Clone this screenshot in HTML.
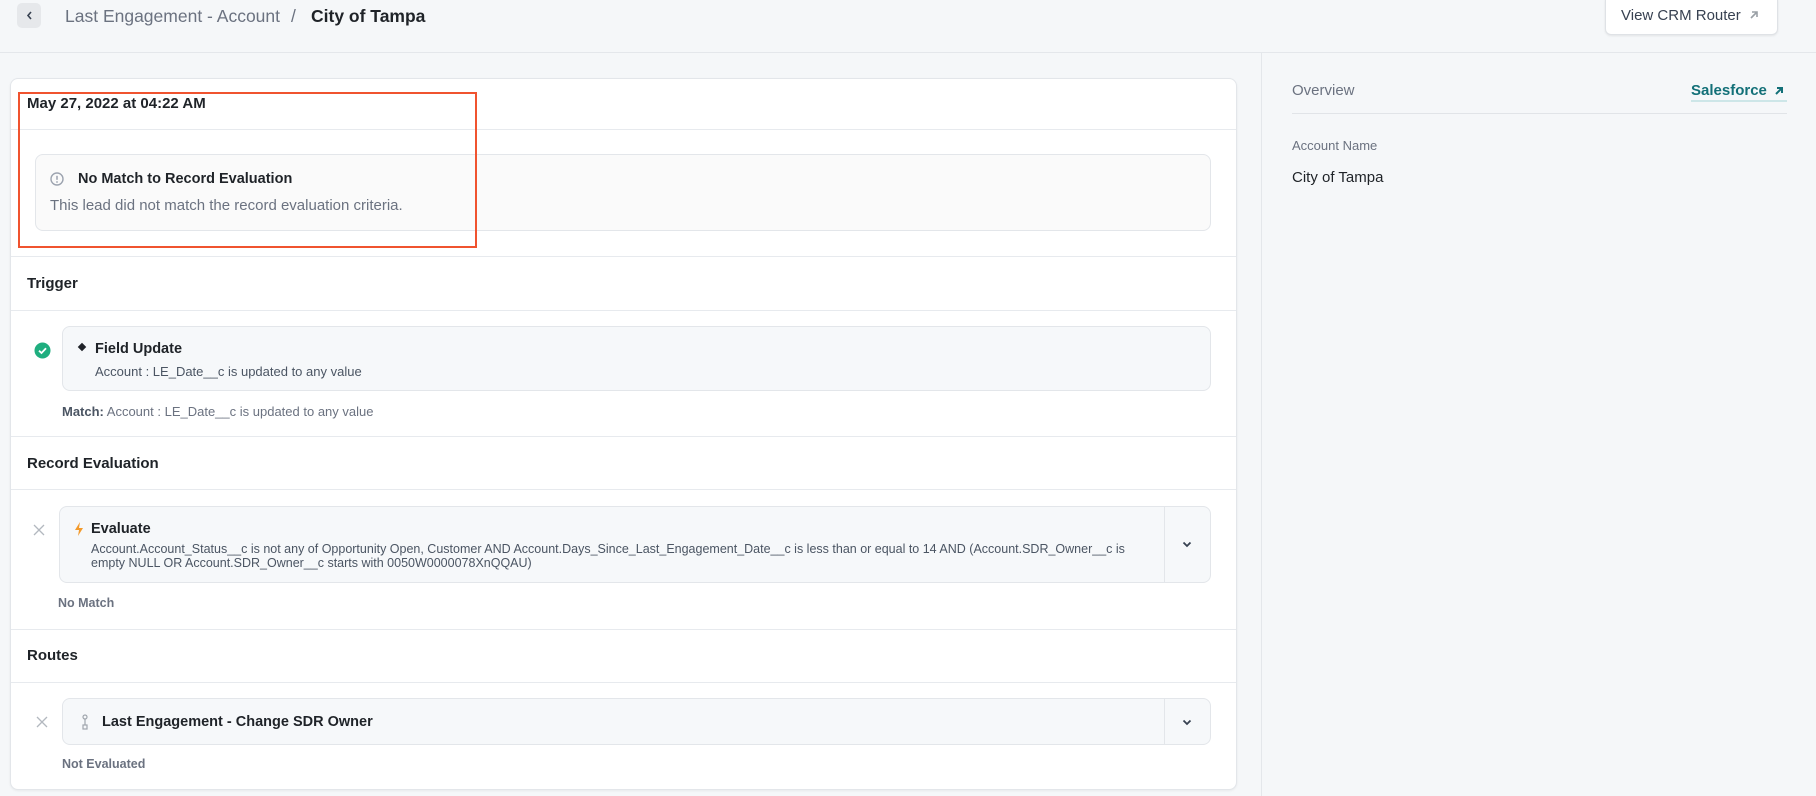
<!DOCTYPE html>
<html><head><meta charset="utf-8"><style>
*{box-sizing:border-box;margin:0;padding:0}
body{width:1816px;height:796px;overflow:hidden;background:#f5f7f9;font-family:"Liberation Sans",Arial,sans-serif;color:#1f2328;position:relative}
.a{position:absolute;white-space:nowrap}
.line{position:absolute;height:1px;background:#e7eaee}
.box{position:absolute;background:#f6f8fa;border:1px solid #e3e6ea;border-radius:8px}
.sb{font-weight:bold}
.g{color:#6b7280}
</style></head><body>
<div class="a" style="left:17px;top:3px;width:24px;height:25px;background:#e6e8eb;border-radius:5px"></div>
<svg class="a" style="left:24px;top:10px" width="11" height="11" viewBox="0 0 11 11"><path d="M7 2 L4 5.5 L7 9" stroke="#374151" stroke-width="1.6" fill="none"/></svg>
<div class="a" style="left:65px;top:6px;font-size:17.5px;color:#6b7280">Last Engagement - Account</div>
<div class="a" style="left:291px;top:6px;font-size:17.5px;color:#6b7280">/</div>
<div class="a sb" style="left:311px;top:6px;font-size:17.5px;color:#1f2328">City of Tampa</div>
<div class="a" style="left:1605px;top:-6px;width:173px;height:41px;background:#fff;border:1px solid #dfe2e6;border-radius:6px;box-shadow:0 1px 2px rgba(0,0,0,.08)"></div>
<div class="a" style="left:1621px;top:7px;font-size:15px;color:#374151">View CRM Router</div>
<svg class="a" style="left:1749px;top:10px" width="10" height="10" viewBox="0 0 10 10"><path d="M2 8 L8 2 M3 2 H8 V7" stroke="#9aa0a6" stroke-width="1.6" fill="none"/></svg>
<div class="line" style="left:0;top:52px;width:1816px;background:#e4e7eb"></div>
<div class="a" style="left:1261px;top:52px;width:1px;height:744px;background:#e4e7eb"></div>
<div class="a g" style="left:1292px;top:82px;font-size:15px">Overview</div>
<div class="a sb" style="left:1691px;top:82px;font-size:15px;color:#137078">Salesforce</div>
<svg class="a" style="left:1774px;top:86px" width="10" height="10" viewBox="0 0 10 10"><path d="M2 8 L8 2 M3 2 H8 V7" stroke="#137078" stroke-width="2" fill="none"/></svg>
<div class="line" style="left:1691px;top:100px;width:96px;height:2px;background:#cde6e8"></div>
<div class="line" style="left:1292px;top:113px;width:495px;background:#e1e4e8"></div>
<div class="a g" style="left:1292px;top:138px;font-size:13px">Account Name</div>
<div class="a" style="left:1292px;top:169px;font-size:15px">City of Tampa</div>
<div class="a" style="left:10px;top:78px;width:1227px;height:712px;background:#fff;border:1px solid #e3e6ea;border-radius:8px;box-shadow:0 1px 2px rgba(0,0,0,.06)"></div>
<div class="a sb" style="left:27px;top:95px;font-size:15px">May 27, 2022 at 04:22 AM</div>
<div class="line" style="left:11px;top:129px;width:1225px"></div>
<div class="box" style="left:35px;top:154px;width:1176px;height:77px;background:#fafafa"></div>
<svg class="a" style="left:50px;top:172px" width="14" height="14" viewBox="0 0 14 14"><circle cx="7" cy="7" r="6" stroke="#9ca3af" stroke-width="1.4" fill="none"/><path d="M7 3.8 V7.8" stroke="#9ca3af" stroke-width="1.5"/><circle cx="7" cy="10" r=".9" fill="#9ca3af"/></svg>
<div class="a sb" style="left:78px;top:171px;font-size:14.5px">No Match to Record Evaluation</div>
<div class="a g" style="left:50px;top:197px;font-size:15px">This lead did not match the record evaluation criteria.</div>
<div class="a" style="left:18px;top:92px;width:459px;height:156px;border:2px solid #f0532f"></div>
<div class="line" style="left:11px;top:256px;width:1225px"></div>
<div class="a sb" style="left:27px;top:275px;font-size:15px">Trigger</div>
<div class="line" style="left:11px;top:310px;width:1225px"></div>
<svg class="a" style="left:34px;top:342px" width="17" height="17" viewBox="0 0 17 17"><circle cx="8.5" cy="8.5" r="8" fill="#1fae7f"/><path d="M5 8.7 L7.5 11 L12 6.3" stroke="#fff" stroke-width="1.8" fill="none"/></svg>
<div class="box" style="left:62px;top:326px;width:1149px;height:65px"></div>
<div class="a" style="left:79px;top:344px;width:6px;height:6px;background:#1f2328;transform:rotate(45deg)"></div>
<div class="a sb" style="left:95px;top:341px;font-size:14.5px">Field Update</div>
<div class="a" style="left:95px;top:364px;font-size:13px;color:#4b5563">Account : LE_Date__c is updated to any value</div>
<div class="a" style="left:62px;top:404px;font-size:13px;color:#6b7280"><b style="color:#4b5563">Match:</b> Account : LE_Date__c is updated to any value</div>
<div class="line" style="left:11px;top:436px;width:1225px"></div>
<div class="a sb" style="left:27px;top:455px;font-size:15px">Record Evaluation</div>
<div class="line" style="left:11px;top:489px;width:1225px"></div>
<svg class="a" style="left:33px;top:524px" width="12" height="12" viewBox="0 0 12 12"><path d="M1 1 L11 11 M11 1 L1 11" stroke="#b3b8bf" stroke-width="1.3"/></svg>
<div class="box" style="left:59px;top:506px;width:1152px;height:77px"></div>
<div class="a" style="left:1164px;top:507px;width:1px;height:75px;background:#e3e6ea"></div>
<svg class="a" style="left:1182px;top:541px" width="10" height="7" viewBox="0 0 10 7"><path d="M1.5 1.5 L5 5 L8.5 1.5" stroke="#374151" stroke-width="1.8" fill="none"/></svg>
<svg class="a" style="left:74px;top:522px" width="10" height="14" viewBox="0 0 10 14"><path d="M6 0 L1 8 H5 L4 14 L9 6 H5 Z" fill="#f39a2b"/></svg>
<div class="a sb" style="left:91px;top:521px;font-size:14.5px">Evaluate</div>
<div class="a" style="left:91px;top:542px;font-size:12.5px;line-height:14px;color:#4b5563">Account.Account_Status__c is not any of Opportunity Open, Customer AND Account.Days_Since_Last_Engagement_Date__c is less than or equal to 14 AND (Account.SDR_Owner__c is<br>empty NULL OR Account.SDR_Owner__c starts with 0050W0000078XnQQAU)</div>
<div class="a sb" style="left:58px;top:596px;font-size:12.5px;color:#6b7280">No Match</div>
<div class="line" style="left:11px;top:629px;width:1225px"></div>
<div class="a sb" style="left:27px;top:647px;font-size:15px">Routes</div>
<div class="line" style="left:11px;top:682px;width:1225px"></div>
<svg class="a" style="left:36px;top:716px" width="12" height="12" viewBox="0 0 12 12"><path d="M1 1 L11 11 M11 1 L1 11" stroke="#b3b8bf" stroke-width="1.3"/></svg>
<div class="box" style="left:62px;top:698px;width:1149px;height:47px"></div>
<div class="a" style="left:1164px;top:699px;width:1px;height:45px;background:#e3e6ea"></div>
<svg class="a" style="left:1182px;top:719px" width="10" height="7" viewBox="0 0 10 7"><path d="M1.5 1.5 L5 5 L8.5 1.5" stroke="#374151" stroke-width="1.8" fill="none"/></svg>
<svg class="a" style="left:82px;top:714px" width="6" height="16" viewBox="0 0 6 16"><circle cx="3" cy="3" r="2" stroke="#a0a6ad" stroke-width="1.2" fill="none"/><path d="M3 5 V11" stroke="#a0a6ad" stroke-width="1.2"/><rect x="1" y="11" width="4" height="4" stroke="#a0a6ad" stroke-width="1.2" fill="none"/></svg>
<div class="a sb" style="left:102px;top:714px;font-size:14.5px">Last Engagement - Change SDR Owner</div>
<div class="a sb" style="left:62px;top:757px;font-size:12.5px;color:#6b7280">Not Evaluated</div>
</body></html>
